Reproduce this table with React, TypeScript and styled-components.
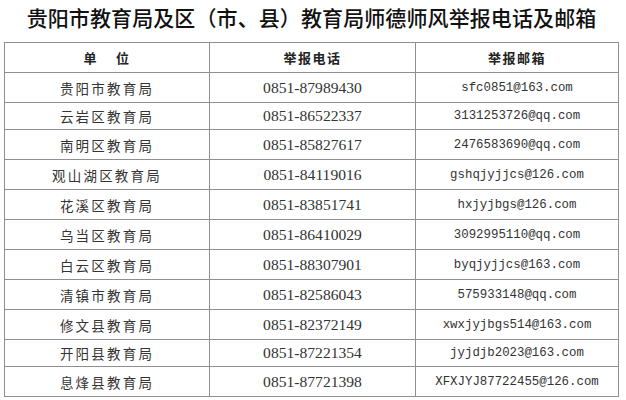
import styled, { createGlobalStyle } from 'styled-components'

interface Bureau {
  name: string
  phone: string
  email: string
  short?: boolean
}

const bureaus: Bureau[] = [
  { name: '贵阳市教育局', phone: '0851-87989430', email: 'sfc0851@163.com' },
  { name: '云岩区教育局', phone: '0851-86522337', email: '3131253726@qq.com', short: true },
  { name: '南明区教育局', phone: '0851-85827617', email: '2476583690@qq.com' },
  { name: '观山湖区教育局', phone: '0851-84119016', email: 'gshqjyjjcs@126.com' },
  { name: '花溪区教育局', phone: '0851-83851741', email: 'hxjyjbgs@126.com' },
  { name: '乌当区教育局', phone: '0851-86410029', email: '3092995110@qq.com' },
  { name: '白云区教育局', phone: '0851-88307901', email: 'byqjyjjcs@163.com' },
  { name: '清镇市教育局', phone: '0851-82586043', email: '575933148@qq.com' },
  { name: '修文县教育局', phone: '0851-82372149', email: 'xwxjyjbgs514@163.com' },
  { name: '开阳县教育局', phone: '0851-87221354', email: 'jyjdjb2023@163.com', short: true },
  { name: '息烽县教育局', phone: '0851-87721398', email: 'XFXJYJ87722455@126.com' },
]

const GlobalStyle = createGlobalStyle`
  body {
    margin: 0;
    background: #fff;
  }
`

export default function App() {
  return (
    <>
      <GlobalStyle />
      <Page>
        <Title>贵阳市教育局及区（市、县）教育局师德师风举报电话及邮箱</Title>
        <Table>
          <colgroup>
            <Col $width={205} />
            <Col $width={206} />
            <Col />
          </colgroup>
          <thead>
            <HeadRow>
              <HeadCell>单&nbsp;&nbsp;&nbsp;&nbsp;位</HeadCell>
              <HeadCell>举报电话</HeadCell>
              <HeadCell>举报邮箱</HeadCell>
            </HeadRow>
          </thead>
          <tbody>
            {bureaus.map((b, index) => (
              <Row key={`bureau${index}`} $short={b.short}>
                <NameCell>{b.name}</NameCell>
                <PhoneCell>{b.phone}</PhoneCell>
                <EmailCell>{b.email}</EmailCell>
              </Row>
            ))}
          </tbody>
        </Table>
      </Page>
    </>
  )
}

const Page = styled.div`
  width: 626px;
  height: 400px;
  padding: 5px 7px 0 4px;
  box-sizing: border-box;
  display: flex;
  flex-direction: column;
  align-items: stretch;
`

const Title = styled.h1`
  margin: 0;
  height: 37px;
  text-align: center;
  font-family: 'Noto Sans CJK SC', sans-serif;
  font-size: 21px;
  font-weight: 500;
  line-height: 24px;
  color: #111;
  letter-spacing: 0.1px;
`

const Table = styled.table`
  width: 615px;
  border-collapse: collapse;
  table-layout: fixed;
  border: 1.5px solid #a6a6a6;
`

const Col = styled.col<{ $width?: number }>`
  width: ${(p) => (p.$width ? `${p.$width}px` : 'auto')};
`

const HeadRow = styled.tr`
  height: 30px;
`

const Row = styled.tr<{ $short?: boolean }>`
  height: ${(p) => (p.$short ? '27px' : '30px')};
`

const HeadCell = styled.th`
  padding: 0;
  border: 1px solid #8f8f8f;
  text-align: center;
  font-family: 'Noto Sans CJK SC', sans-serif;
  font-size: 13px;
  font-weight: 600;
  color: #222;
  letter-spacing: 1.5px;
`

const Cell = styled.td`
  padding: 0;
  border: 1px solid #8f8f8f;
  text-align: center;
  color: #333;
`

const NameCell = styled(Cell)`
  font-family: 'Noto Sans CJK SC', sans-serif;
  font-size: 13.5px;
  letter-spacing: 2.2px;
  font-weight: 400;
`

const PhoneCell = styled(Cell)`
  font-family: 'Liberation Serif', serif;
  font-size: 15.6px;
`

const EmailCell = styled(Cell)`
  font-family: 'Liberation Mono', monospace;
  font-size: 12.4px;
`
